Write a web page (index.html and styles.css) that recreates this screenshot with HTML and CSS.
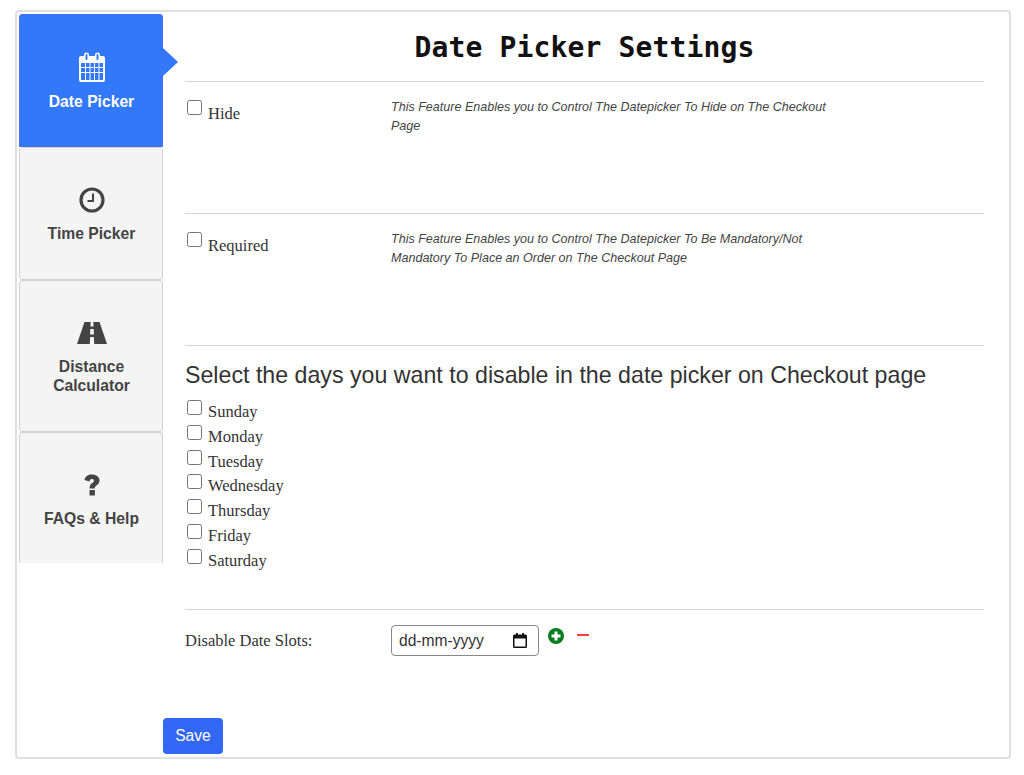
FILE: index.html
```html
<!DOCTYPE html>
<html lang="en">
<head>
  <meta charset="UTF-8" />
  <title>Date Picker Settings</title>
  <link rel="stylesheet" href="styles.css">
</head>
<body>
  <div class="panel">
    <div class="panel-top">
      <div class="tabs">
        <div class="tab tab-active">
          <svg class="tab-icon" width="28" height="30" viewBox="0 0 28 30">
            <path fill="#fff" fill-rule="evenodd" d="M3 4h3V3a2.500 2.500 0 0 1 5 0v1h6V3a2.500 2.500 0 0 1 5 0v1h3a2 2 0 0 1 2 2v22a2 2 0 0 1-2 2H3a2 2 0 0 1-2-2V6a2 2 0 0 1 2-2zM7.500 3v4a1 1 0 0 0 2 0V3a1 1 0 0 0-2 0zm11 0v4a1 1 0 0 0 2 0V3a1 1 0 0 0-2 0zM3 11v4h4v-4zm5 0v4h3.500v-4zm4.500 0v4H16v-4zm4.500 0v4h3.500v-4zm4.500 0v4H25v-4zM3 16v4h4v-4zm5 0v4h3.500v-4zm4.500 0v4H16v-4zm4.500 0v4h3.500v-4zm4.500 0v4H25v-4zM3 21v7h4v-7zm5 0v7h3.500v-7zm4.500 0v7H16v-7zm4.500 0v7h3.500v-7zm4.500 0v7H25v-7z"/>
          </svg>
          <span class="tab-label">Date Picker</span>
        </div>
        <div class="tab tab-time">
          <svg class="tab-icon" width="26" height="26" viewBox="0 0 26 26">
            <circle cx="13" cy="13" r="11" fill="none" stroke="#444" stroke-width="3.200"/>
            <path fill="none" stroke="#444" stroke-width="2" d="M14 6.500V14H8.500"/>
          </svg>
          <span class="tab-label">Time Picker</span>
        </div>
        <div class="tab tab-tall">
          <svg class="tab-icon" width="32" height="24" viewBox="0 0 32 24">
            <path fill="#444" fill-rule="evenodd" d="M8.500 1h6.200l-.3 4.500h3.200L17.300 1h6.200L31 23H18.200l-.4-7h-3.600l-.4 7H1zM14.300 8l-.2 5.500h3.800L17.700 8z"/>
          </svg>
          <span class="tab-label">Distance<br>Calculator</span>
        </div>
        <div class="tab">
          <svg class="tab-icon" width="18" height="24" viewBox="0 0 18 24">
            <path fill="#444" d="M6.500 17h5.400v5.500H6.500zM1.500 7C2 3.500 5 1.500 9 1.500c4.300 0 7.500 2.400 7.500 6 0 2.600-1.500 3.900-3 5-1.100.8-1.700 1.400-1.700 2.900H6.600c-.1-2.800.9-4 2.400-5.100 1.100-.8 1.900-1.400 1.900-2.500 0-1-.8-1.700-2-1.700-1.300 0-2.100.8-2.400 2.300z"/>
          </svg>
          <span class="tab-label">FAQs &amp; Help</span>
        </div>
      </div>
      <div class="content">
        <h1>Date Picker Settings</h1>
        <section class="setting">
          <label class="check"><input type="checkbox"><span>Hide</span></label>
          <p class="hint">This Feature Enables you to Control The Datepicker To Hide on The Checkout Page</p>
        </section>
        <section class="setting">
          <label class="check"><input type="checkbox"><span>Required</span></label>
          <p class="hint">This Feature Enables you to Control The Datepicker To Be Mandatory/Not Mandatory To Place an Order on The Checkout Page</p>
        </section>
        <section class="days">
          <h2>Select the days you want to disable in the date picker on Checkout page</h2>
          <label class="check day"><input type="checkbox"><span>Sunday</span></label>
          <label class="check day"><input type="checkbox"><span>Monday</span></label>
          <label class="check day"><input type="checkbox"><span>Tuesday</span></label>
          <label class="check day"><input type="checkbox"><span>Wednesday</span></label>
          <label class="check day"><input type="checkbox"><span>Thursday</span></label>
          <label class="check day"><input type="checkbox"><span>Friday</span></label>
          <label class="check day"><input type="checkbox"><span>Saturday</span></label>
        </section>
        <section class="slots">
          <span class="slots-label">Disable Date Slots:</span>
          <div class="date-input">
            <span>dd-mm-yyyy</span>
            <svg width="14" height="15" viewBox="0 0 14 15">
              <path fill="#111" fill-rule="evenodd" d="M3 0h1.800v1.500h4.400V0H11v1.500h1.500A1.500 1.500 0 0 1 14 3v10.500a1.500 1.500 0 0 1-1.500 1.500h-11A1.500 1.500 0 0 1 0 13.500V3a1.500 1.500 0 0 1 1.500-1.500H3zM1.500 5.500v8h11v-8z"/>
            </svg>
          </div>
          <svg class="slot-icon" width="16" height="16" viewBox="0 0 16 16">
            <circle cx="8" cy="8" r="8" fill="#0a7d23"/>
            <path fill="#fff" d="M6.500 3.500h3v3h3v3h-3v3h-3v-3h-3v-3h3z"/>
          </svg>
          <span class="minus"></span>
        </section>
      </div>
    </div>
    <div class="panel-foot">
      <button class="save">Save</button>
    </div>
  </div>
</body>
</html>
```

FILE: styles.css
```css
* { box-sizing: border-box; }
body {
  margin: 0;
  background-color: #fff;
  font-family: "Liberation Serif", serif;
  color: #333;
}
.panel {
  width: 996px;
  height: 749px;
  margin: 10px 0 0 15px;
  padding: 2px;
  border: 2px solid #e0e0e0;
  border-radius: 4px;
}
.panel-top { display: flex; }

.tabs { width: 144px; flex-shrink: 0; }
.tab {
  position: relative;
  height: 133px;
  display: flex;
  flex-direction: column;
  align-items: center;
  justify-content: center;
  padding: 4px 0 0 1px;
  background-color: #f4f4f4;
  border: 1px solid #d4d4d4;
  border-radius: 3px;
  font-family: "Liberation Sans", sans-serif;
  font-size: 15.7px;
  font-weight: bold;
  line-height: 19px;
  color: #444;
  text-align: center;
}
.tab:last-child { height: 131px; border-bottom: 0; border-radius: 3px 3px 0 0; }
.tab-tall { height: 152px; }
.tab-time { padding-top: 3px; }
.tab-active {
  padding-top: 2px;
  background-color: #3278fa;
  border-color: #4a6cf7;
  color: #fff;
  border-radius: 3px 3px 0 0;
}
.tab-active::after {
  content: "";
  position: absolute;
  left: 143px;
  top: 33px;
  border-left: 15px solid #3278fa;
  border-top: 14px solid transparent;
  border-bottom: 14px solid transparent;
}
.tab-icon { margin-bottom: 12px; }
.tab-active .tab-icon { margin-bottom: 10px; }
.tab-time .tab-icon { margin-bottom: 11px; }

.content { width: 799px; margin-left: 22px; }
h1 {
  margin: 0;
  height: 68px;
  padding-top: 17px;
  border-bottom: 1px solid #d4d4d4;
  font-family: "DejaVu Sans Mono", monospace;
  font-size: 28px;
  line-height: 34px;
  letter-spacing: 0.15px;
  color: #111;
  text-align: center;
}
.setting {
  display: flex;
  height: 132px;
  padding-top: 18px;
  border-bottom: 1px solid #d4d4d4;
}
.setting .check { width: 206px; }
.check {
  display: flex;
  align-items: flex-start;
  padding-left: 2px;
  font-size: 16.5px;
  line-height: 20px;
}
.check input {
  width: 15px;
  height: 15px;
  margin: 0 6px 0 0;
}
.check span { padding-top: 4px; }
.hint {
  width: 450px;
  margin: -2px 0 0;
  font-family: "Liberation Sans", sans-serif;
  font-size: 12.55px;
  font-style: italic;
  line-height: 19px;
  color: #444;
}
.days {
  height: 264px;
  border-bottom: 1px solid #d4d4d4;
}
h2 {
  margin: 0;
  padding-top: 16px;
  height: 54px;
  font-family: "Liberation Sans", sans-serif;
  font-size: 23.2px;
  font-weight: normal;
  line-height: 26px;
  color: #333;
}
.day { height: 24.75px; }
.day span { padding-top: 2px; }
.slots {
  display: flex;
  align-items: flex-start;
  padding-top: 15px;
}
.slots-label {
  width: 206px;
  padding-top: 7px;
  font-size: 16.5px;
  line-height: 18px;
}
.date-input {
  display: flex;
  align-items: center;
  justify-content: space-between;
  width: 148px;
  height: 31px;
  padding: 0 11px 0 7px;
  background-color: #fff;
  border: 1px solid #888;
  border-radius: 4px;
  font-family: "Liberation Sans", sans-serif;
  font-size: 15.6px;
  color: #333;
}
.slot-icon { margin: 3px 0 0 9px; }
.minus {
  width: 12px;
  height: 2px;
  margin: 9px 0 0 13px;
  background-color: #f44336;
}
.panel-foot { padding: 62px 0 0 144px; }
.save {
  display: block;
  width: 60px;
  height: 36px;
  padding: 0;
  background-color: #3367f5;
  color: #fff;
  border: 0;
  border-radius: 4px;
  font-family: "Liberation Sans", sans-serif;
  font-size: 15.6px;
}
```
